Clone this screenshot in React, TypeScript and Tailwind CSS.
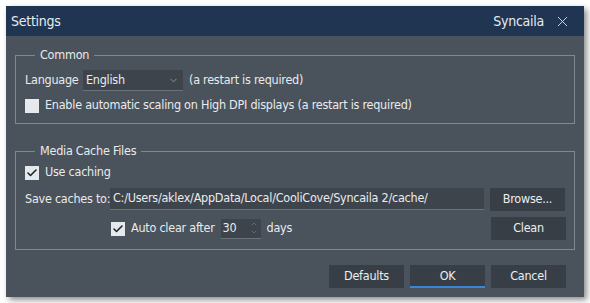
import { Check, ChevronDown, ChevronUp, X } from 'lucide-react';
import type { ReactNode } from 'react';

const font = {
  fontFamily: '"DejaVu Sans Condensed", "DejaVu Sans", sans-serif',
};

function CheckBox({ checked }: { checked?: boolean }) {
  return (
    <span className="flex size-[14px] shrink-0 items-center justify-center bg-[#e6e9ec]">
      {checked ? <Check className="size-[12px] text-[#1d232a]" strokeWidth={3.2} /> : null}
    </span>
  );
}

function Group({ title, children }: { title: string; children: ReactNode }) {
  return (
    <fieldset className="border border-[#80878f] px-[9px] pr-[8px]">
      <legend className="ml-[10px] px-[5px] leading-[16px]">{title}</legend>
      {children}
    </fieldset>
  );
}

function Button({ label, primary }: { label: string; primary?: boolean }) {
  return (
    <button
      type="button"
      className={
        primary
          ? 'h-[23px] w-[75px] border-b-2 border-[#3a86d4] bg-[#383e46] pt-[2px] text-[#eceef0]'
          : 'h-[23px] w-[75px] bg-[#383e46] text-[#eceef0]'
      }
    >
      {label}
    </button>
  );
}

export default function App() {
  return (
    <div className="h-[303px] w-[590px] bg-white pl-[6px] pt-[6px]" style={font}>
      <div className="flex h-[291px] w-[578px] flex-col whitespace-nowrap bg-[#4a525b] text-[12.5px] tracking-[-0.25px] text-[#e9ebed] shadow-[3px_3px_6px_rgba(0,0,0,0.45)]">
        <div className="flex h-[30px] items-center justify-between bg-[#1f3552] pl-[5px] pr-[13px] text-[14px]">
          <span>Settings</span>
          <div className="flex items-center gap-[10px]">
            <span>Syncaila</span>
            <X className="size-[17px]" strokeWidth={1.2} />
          </div>
        </div>

        <div className="flex flex-1 flex-col px-[9px] pt-[11px]">
          <Group title="Common">
            <div className="mt-[7px] flex h-[21px] items-center">
              <span className="w-[58px] shrink-0">Language</span>
              <div className="flex h-[21px] w-[100px] items-center justify-between border-b border-[#6b727a] bg-[#3e444c] pl-[3px] pr-[4px]">
                <span>English</span>
                <ChevronDown className="size-[11px] text-[#aab0b6]" strokeWidth={1.5} />
              </div>
              <span className="ml-[6px]">(a restart is required)</span>
            </div>
            <div className="mb-[7px] mt-[4px] flex h-[21px] items-center gap-[6px]">
              <CheckBox />
              <span>Enable automatic scaling on High DPI displays (a restart is required)</span>
            </div>
          </Group>

          <div className="mt-[19px]">
            <Group title="Media Cache Files">
              <div className="mt-[3px] flex h-[21px] items-center gap-[6px]">
                <CheckBox checked />
                <span>Use caching</span>
              </div>
              <div className="mt-[5px] flex h-[22px] items-center">
                <span className="w-[85px] shrink-0">Save caches to:</span>
                <div className="flex h-[22px] w-[374px] items-center border-b border-[#6b727a] bg-[#3e444c] pl-[3px]">
                  C:/Users/aklex/AppData/Local/CooliCove/Syncaila 2/cache/
                </div>
                <div className="ml-[6px]">
                  <Button label="Browse..." />
                </div>
              </div>
              <div className="mb-[9px] mt-[7px] flex h-[23px] items-center">
                <div className="ml-[86px] flex items-center gap-[6px]">
                  <CheckBox checked />
                  <span>Auto clear after</span>
                </div>
                <div className="ml-[6px] flex h-[20px] w-[40px] items-center justify-between border-b border-[#6b727a] bg-[#3e444c] pl-[2px] pr-[3px]">
                  <span>30</span>
                  <div className="flex flex-col text-[#8d949b]">
                    <ChevronUp className="size-[8px]" strokeWidth={1.5} />
                    <ChevronDown className="size-[8px]" strokeWidth={1.5} />
                  </div>
                </div>
                <span className="ml-[6px]">days</span>
                <div className="ml-auto">
                  <Button label="Clean" />
                </div>
              </div>
            </Group>
          </div>

          <div className="mt-[15px] flex justify-end gap-[6px] pr-[9px]">
            <Button label="Defaults" />
            <Button label="OK" primary />
            <Button label="Cancel" />
          </div>
        </div>
      </div>
    </div>
  );
}
